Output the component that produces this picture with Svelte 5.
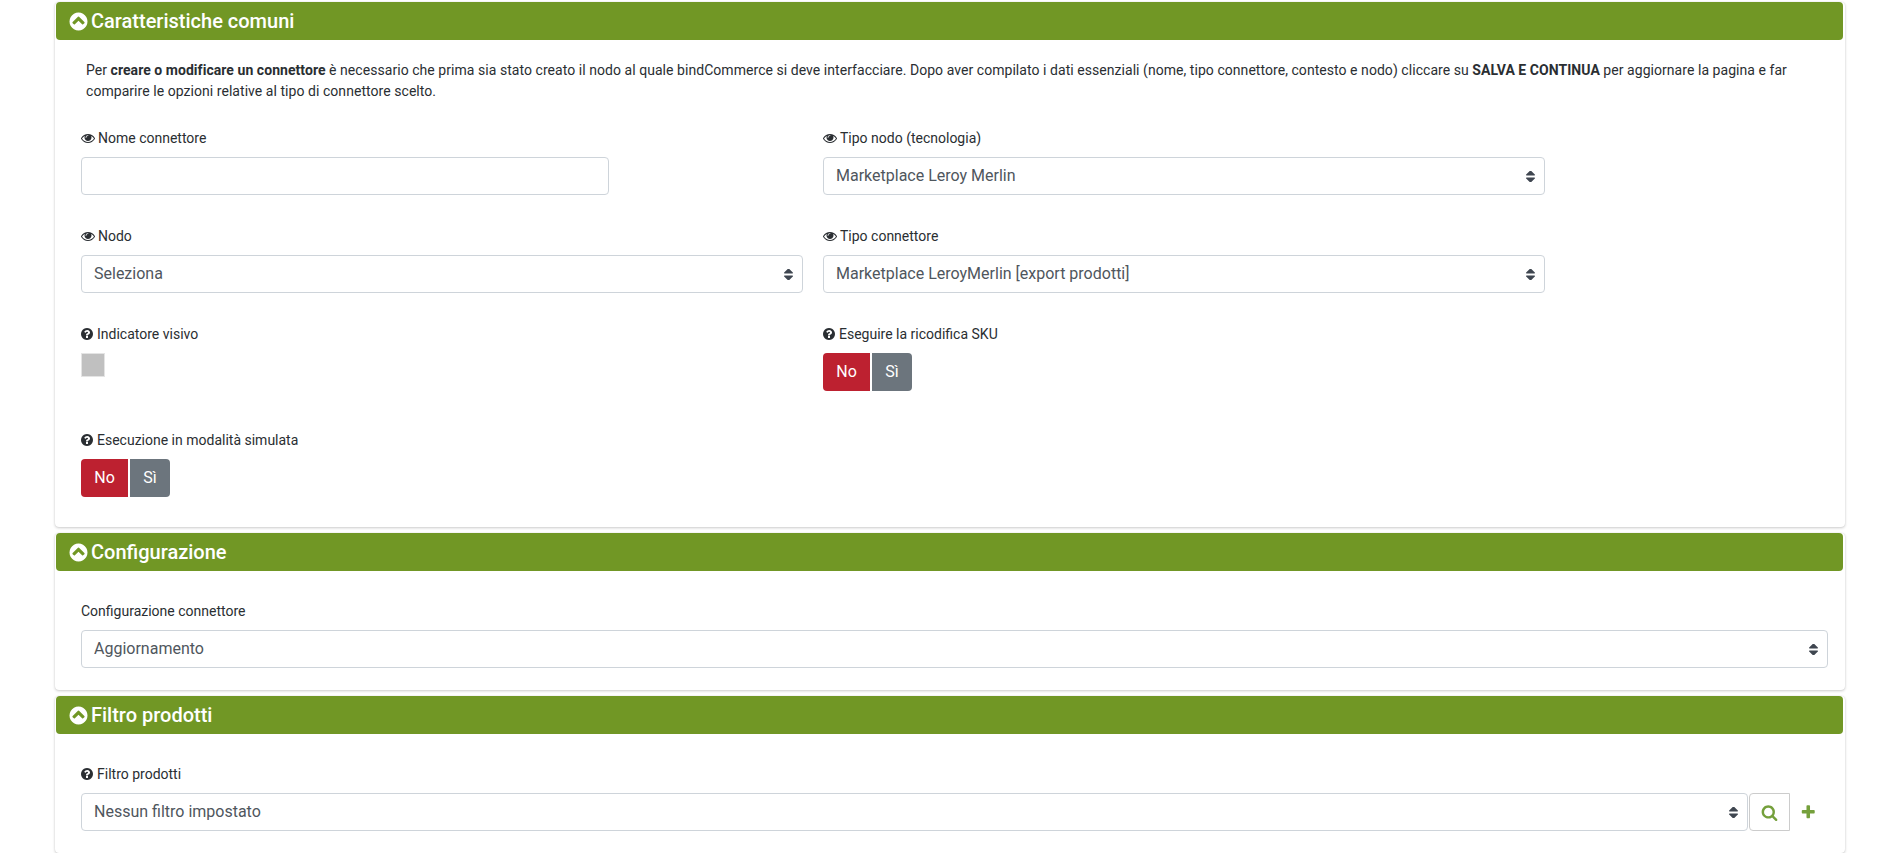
<script>
    const eye = "M1664 960q-152-236-381-353 61 104 61 225 0 185-131.5 316.5t-316.5 131.5-316.5-131.5-131.5-316.5q0-121 61-225-229 117-381 353 133 205 333.5 326.5t434.5 121.5 434.5-121.5 333.5-326.5zm-720-384q0-20-14-34t-34-14q-125 0-214.5 89.5t-89.5 214.5q0 20 14 34t34 14 34-14 14-34q0-86 61-147t147-61q20 0 34-14t14-34zm848 384q0 34-20 69-140 230-376.5 368.5t-499.5 138.5-499.5-139-376.5-368q-20-35-20-69t20-69q140-229 376.5-368t499.5-139 499.5 139 376.5 368q20 35 20 69z";
    const question = "M1024 1376v-192q0-14-9-23t-23-9h-192q-14 0-23 9t-9 23v192q0 14 9 23t23 9h192q14 0 23-9t9-23zm256-672q0-88-55.5-163t-138.5-116-170-41q-243 0-371 213-15 24 8 42l132 100q7 6 19 6 16 0 25-12 53-68 86-92 34-24 86-24 48 0 85.5 26t37.5 59q0 38-20 61t-68 45q-63 28-115.5 86.5t-52.5 125.5v36q0 14 9 23t23 9h192q14 0 23-9t9-23q0-19 21.5-49.5t54.5-49.5q32-18 49-28.5t46-35 44.5-48 28-60.5 12.5-81zm384 192q0 209-103 385.5t-279.5 279.5-385.5 103-385.5-103-279.5-279.5-103-385.5 103-385.5 279.5-279.5 385.5-103 385.5 103 279.5 279.5 103 385.5z";
    const chevron = "M1293 1139l102-102q19-19 19-45t-19-45l-454-454q-19-19-45-19t-45 19l-454 454q-19 19-19 45t19 45l102 102q19 19 45 19t45-19l307-307 307 307q19 19 45 19t45-19zm371-243q0 209-103 385.5t-279.5 279.5-385.5 103-385.5-103-279.5-279.5-103-385.5 103-385.5 279.5-279.5 385.5-103 385.5 103 279.5 279.5 103 385.5z";
    const search = "M1216 832q0-185-131.5-316.5t-316.5-131.5-316.5 131.5-131.5 316.5 131.5 316.5 316.5 131.5 316.5-131.5 131.5-316.5zm512 832q0 52-38 90t-90 38q-54 0-90-38l-343-342q-179 124-399 124-143 0-273.5-55.5t-225-150-150-225-55.5-273.5 55.5-273.5 150-225 225-150 273.5-55.5 273.5 55.5 225 150 150 225 55.5 273.5q0 220-124 399l343 343q37 37 37 90z";
    const plus = "M1600 736v192q0 40-28 68t-68 28h-416v416q0 40-28 68t-68 28h-192q-40 0-68-28t-28-68v-416h-416q-40 0-68-28t-28-68v-192q0-40 28-68t68-28h416v-416q0-40 28-68t68-28h192q40 0 68 28t28 68v416h416q40 0 68 28t28 68z";
    const sort = "M1408 1088q0 26-19 45l-448 448q-19 19-45 19t-45-19l-448-448q-19-19-19-45t19-45 45-19h896q26 0 45 19t19 45zm0-384q0 26-19 45t-45 19h-896q-26 0-45-19t-19-45 19-45l448-448q19-19 45-19t45 19l448 448q19 19 19 45z";
</script>

{#snippet icon(d, cls)}
    <svg class={cls} viewBox="0 0 1792 1792" aria-hidden="true"><path {d} /></svg>
{/snippet}

{#snippet eyeLabel(text)}
    <div class="label">{@render icon(eye, "eye-icon")}<span>{text}</span></div>
{/snippet}

{#snippet helpLabel(text)}
    <div class="label">
        <svg class="help-icon" viewBox="128 128 1536 1536" aria-hidden="true"><path d={question} /></svg>
        <span>{text}</span>
    </div>
{/snippet}

{#snippet picker(value)}
    <div class="select-wrap">
        <select><option>{value}</option></select>
        <svg class="carets" viewBox="384 256 1024 1280" preserveAspectRatio="none" aria-hidden="true"><path d={sort} /></svg>
    </div>
{/snippet}

{#snippet toggle()}
    <div class="toggle">
        <button class="no">No</button>
        <button class="si">Sì</button>
    </div>
{/snippet}

<main>
    <section class="card">
        <h2>{@render icon(chevron, "head-icon")}Caratteristiche comuni</h2>
        <div class="body first">
            <p class="intro">Per <b>creare o modificare un connettore</b> è necessario che prima sia stato creato il nodo al quale bindCommerce si deve interfacciare. Dopo aver compilato i dati essenziali (nome, tipo connettore, contesto e nodo) cliccare su <b>SALVA E CONTINUA</b> per aggiornare la pagina e far comparire le opzioni relative al tipo di connettore scelto.</p>
            <div class="grid">
                <div>
                    {@render eyeLabel("Nome connettore")}
                    <input class="name" type="text" />
                </div>
                <div>
                    {@render eyeLabel("Tipo nodo (tecnologia)")}
                    {@render picker("Marketplace Leroy Merlin")}
                </div>
                <div>
                    {@render eyeLabel("Nodo")}
                    {@render picker("Seleziona")}
                </div>
                <div>
                    {@render eyeLabel("Tipo connettore")}
                    {@render picker("Marketplace LeroyMerlin [export prodotti]")}
                </div>
                <div>
                    {@render helpLabel("Indicatore visivo")}
                    <div class="swatch"></div>
                </div>
                <div>
                    {@render helpLabel("Eseguire la ricodifica SKU")}
                    {@render toggle()}
                </div>
                <div>
                    {@render helpLabel("Esecuzione in modalità simulata")}
                    {@render toggle()}
                </div>
            </div>
        </div>
    </section>

    <section class="card">
        <h2>{@render icon(chevron, "head-icon")}Configurazione</h2>
        <div class="body">
            <div class="label"><span>Configurazione connettore</span></div>
            {@render picker("Aggiornamento")}
        </div>
    </section>

    <section class="card">
        <h2>{@render icon(chevron, "head-icon")}Filtro prodotti</h2>
        <div class="body">
            {@render helpLabel("Filtro prodotti")}
            <div class="filter">
                {@render picker("Nessun filtro impostato")}
                <button class="search">{@render icon(search, "search-icon")}</button>
                {@render icon(plus, "plus-icon")}
            </div>
        </div>
    </section>
</main>

<style>
    :global(body) {
        background: #fff;
        font-family: Roboto, "Liberation Sans", sans-serif;
        color: #2a2e32;
    }

    main {
        padding: 2px 53px 0 55px;
        display: flex;
        flex-direction: column;
        gap: 6px;
    }

    .card {
        background: #fff;
        border-radius: 4px;
        box-shadow: 0 0 1px rgba(0, 0, 0, .125), 0 1px 3px rgba(0, 0, 0, .2);
    }

    h2 {
        margin: 0 2px 0 1px;
        height: 38px;
        background: #719725;
        border-radius: 4px;
        color: #fff;
        font-size: 20px;
        font-weight: 500;
        display: flex;
        align-items: center;
        padding-left: 11.5px;
    }

    .head-icon {
        width: 21px;
        height: 21px;
        fill: #fff;
        margin-right: 2.5px;
    }

    .body {
        padding: 30px 17px 22px 26px;
    }

    .body.first {
        padding-top: 20px;
    }

    .intro {
        margin: 0 40px 26px 5px;
        font-size: 14px;
        line-height: 21px;
        letter-spacing: .05px;
    }

    .grid {
        display: grid;
        grid-template-columns: 722px 722px;
        column-gap: 20px;
        row-gap: 31px;
    }

    .label {
        display: flex;
        align-items: center;
        height: 20px;
        margin-bottom: 9px;
        font-size: 14px;
    }

    .eye-icon {
        width: 14px;
        height: 14px;
        fill: #2a2e32;
        margin-right: 3px;
    }

    .help-icon {
        width: 12px;
        height: 12px;
        fill: #2a2e32;
        margin-right: 4px;
    }

    input, select {
        box-sizing: border-box;
        display: block;
        width: 100%;
        height: 38px;
        border: 1px solid #ced4da;
        border-radius: 4px;
        background: #fff;
        color: #4f565d;
        font-family: inherit;
        font-size: 16px;
        padding: 0 12px 2px;
        appearance: none;
    }

    input.name {
        width: 528px;
    }

    .select-wrap {
        position: relative;
        flex: 1;
    }

    .carets {
        position: absolute;
        right: 10px;
        top: 13.5px;
        width: 9px;
        height: 11px;
        fill: #3f4650;
    }

    .swatch {
        width: 24px;
        height: 24px;
        background: #c0c0c0;
        border: 1px solid #e4e4e4;
        box-sizing: border-box;
    }

    .toggle {
        display: flex;
        gap: 2px;
        margin-bottom: 8px;
    }

    .toggle button {
        height: 38px;
        border: none;
        color: #fff;
        font-family: inherit;
        font-size: 16px;
        padding: 0 0 2px;
    }

    .no {
        width: 47px;
        background: #bd2130;
        border-radius: 4px 0 0 4px;
    }

    .si {
        width: 40px;
        background: #6c757d;
        border-radius: 0 4px 4px 0;
    }

    .filter {
        display: flex;
        align-items: center;
    }

    .search {
        width: 41px;
        height: 38px;
        flex: none;
        margin-left: 1px;
        background: #fff;
        border: 1px solid #ccc;
        border-radius: 4px 0 0 4px;
        display: flex;
        align-items: center;
        justify-content: center;
        padding: 0;
    }

    .search-icon {
        width: 17px;
        height: 17px;
        fill: #75a03c;
    }

    .plus-icon {
        width: 16.5px;
        height: 16.5px;
        fill: #75a03c;
        flex: none;
        margin: 0 12px 0 10px;
    }
</style>
